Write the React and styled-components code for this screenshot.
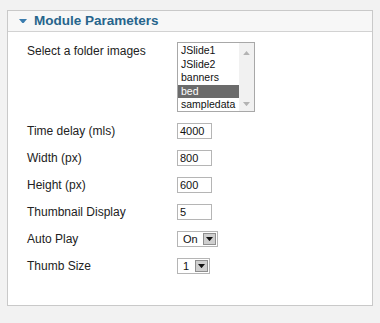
import React from "react";
import styled, { createGlobalStyle } from "styled-components";

const GlobalStyle = createGlobalStyle`
  html, body {
    margin: 0;
    padding: 0;
    background: #f2f2f2;
    font-family: "Liberation Sans", Arial, sans-serif;
  }
`;

const Page = styled.div`
  padding: 10px 7px 16px 7px;
  width: 366px;
`;

const Panel = styled.div`
  background: #fff;
  border: 1px solid #c9c9c9;
  height: 296px;
  box-sizing: border-box;
`;

const Header = styled.div`
  display: flex;
  align-items: center;
  height: 20px;
  background: #f7f7f7;
  border-bottom: 1px solid #d2d2d2;
  padding-left: 11px;
  gap: 7px;
`;

const Title = styled.h3`
  margin: 0;
  font-size: 13.5px;
  font-weight: bold;
  color: #27658c;
  line-height: 20px;
`;

const Form = styled.div`
  display: grid;
  grid-template-columns: 150px auto;
  row-gap: 11px;
  padding: 10px 0 0 19px;
`;

const Label = styled.div`
  font-size: 12px;
  color: #222;
  align-self: ${(p) => (p.$top ? "start" : "center")};
  padding-top: ${(p) => (p.$top ? "2px" : "0")};
`;

const Field = styled.div`
  display: flex;
`;

const ListBox = styled.div`
  display: flex;
  width: 78px;
  height: 70px;
  box-sizing: border-box;
  border: 1px solid #a8a8a8;
  background: #fff;
`;

const Options = styled.div`
  flex: 1;
  display: flex;
  flex-direction: column;
  padding-top: 1px;
`;

const Option = styled.div`
  height: 13.5px;
  line-height: 13.5px;
  font-size: 10.5px;
  padding-left: 3px;
  color: ${(p) => (p.$selected ? "#fff" : "#111")};
  background: ${(p) => (p.$selected ? "#6b6b6b" : "transparent")};
`;

const Scroll = styled.div`
  width: 15px;
  background: #f1f1f1;
  display: flex;
  flex-direction: column;
  justify-content: space-between;
  align-items: center;
  padding: 8px 0 5px;
`;

const TextInput = styled.div`
  width: 35px;
  height: 16px;
  box-sizing: border-box;
  border: 1px solid #b5b5b5;
  font-size: 11px;
  line-height: 14px;
  padding-left: 2px;
  color: #111;
`;

const Select = styled.div`
  display: flex;
  align-items: center;
  justify-content: space-between;
  width: ${(p) => p.$w}px;
  height: 16px;
  box-sizing: border-box;
  border: 1px solid #b5b5b5;
  font-size: 11px;
  padding: 0 1px 0 ${(p) => p.$pad}px;
  color: #111;
`;

const SelectButton = styled.div`
  width: 13px;
  height: 12px;
  box-sizing: border-box;
  border: 1px solid #8f8f8f;
  background: #cfcfcf;
  display: flex;
  align-items: center;
  justify-content: center;
`;

const Triangle = ({ size = 7, color = "#3a78a6", up = false }) => (
  <svg width={size} height={size * 0.6} viewBox="0 0 10 6">
    <path d={up ? "M0 6 L5 0 L10 6 Z" : "M0 0 L10 0 L5 6 Z"} fill={color} />
  </svg>
);

const folders = ["JSlide1", "JSlide2", "banners", "bed", "sampledata"];

const inputs = [
  { label: "Time delay (mls)", value: "4000" },
  { label: "Width (px)", value: "800" },
  { label: "Height (px)", value: "600" },
  { label: "Thumbnail Display", value: "5" },
];

export default function App() {
  return (
    <>
      <GlobalStyle />
      <Page>
        <Panel>
          <Header>
            <Triangle size={8} color="#3a7cae" />
            <Title>Module Parameters</Title>
          </Header>
          <Form>
            <Label $top>Select a folder images</Label>
            <Field>
              <ListBox>
                <Options>
                  {folders.map((f) => (
                    <Option key={f} $selected={f === "bed"}>
                      {f}
                    </Option>
                  ))}
                </Options>
                <Scroll>
                  <Triangle size={7} color="#b3b3b3" up />
                  <Triangle size={7} color="#b3b3b3" />
                </Scroll>
              </ListBox>
            </Field>
            {inputs.map((i) => (
              <React.Fragment key={i.label}>
                <Label>{i.label}</Label>
                <Field>
                  <TextInput>{i.value}</TextInput>
                </Field>
              </React.Fragment>
            ))}
            <Label>Auto Play</Label>
            <Field>
              <Select $w={41} $pad={5}>
                On
                <SelectButton>
                  <Triangle size={7} color="#111" />
                </SelectButton>
              </Select>
            </Field>
            <Label>Thumb Size</Label>
            <Field>
              <Select $w={33} $pad={5}>
                1
                <SelectButton>
                  <Triangle size={7} color="#111" />
                </SelectButton>
              </Select>
            </Field>
          </Form>
        </Panel>
      </Page>
    </>
  );
}
